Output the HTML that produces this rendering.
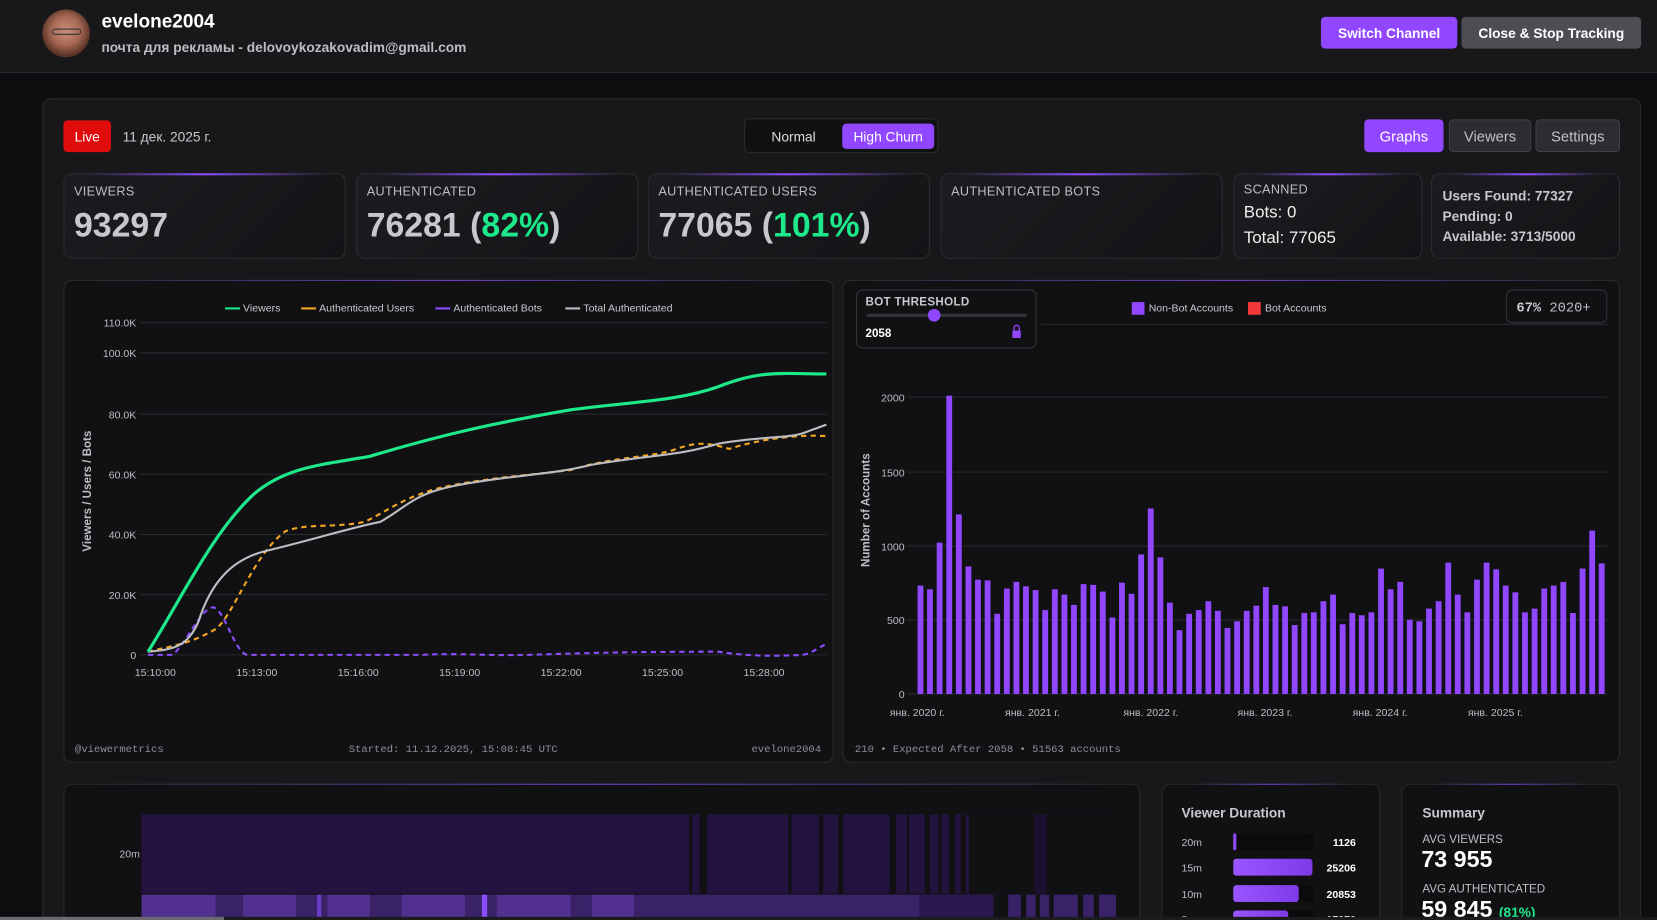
<!DOCTYPE html>
<html><head><meta charset="utf-8">
<style>
*{box-sizing:border-box;margin:0;padding:0}
html,body{width:1657px;height:920px;overflow:hidden;background:#0e0e10;font-family:"Liberation Sans","Noto Sans CJK JP",sans-serif;color:#efeff1}
#w{position:absolute;left:0;top:0;width:1568px;height:871px;overflow:hidden;transform:scale(1.05676,1.05626);transform-origin:0 0;background:#0e0e10}
.a{position:absolute}
.hdr{left:0;top:0;width:1568px;height:69px;background:#18181b;border-bottom:1px solid #2e2e33}
.btn{position:absolute;display:flex;align-items:center;justify-content:center;border-radius:4px;font-size:13px}
.panel{left:40px;top:93px;width:1513px;height:800px;background:#18181b;border:1px solid #2a2a2e;border-radius:8px}
.card{position:absolute;top:164px;height:81px;border:1px solid #2c2c31;border-radius:8px;background:linear-gradient(135deg,#1c1c20,#141417)}
.card:before{content:"";position:absolute;left:20px;right:20px;top:-1px;height:2px;background:linear-gradient(90deg,transparent,#8a4dff,transparent)}
.lbl{position:absolute;left:9px;top:9px;font-size:12px;color:#bdbdc2;letter-spacing:.3px}
.big{position:absolute;left:9px;top:30px;font-size:32px;font-weight:bold;color:#c8c8cc}
.g{color:#1de98b}
.cp{position:absolute;background:#111114;border:1px solid #2a2a2e;border-radius:8px}
.cp:before{content:"";position:absolute;left:30px;right:30px;top:-1px;height:1px;background:linear-gradient(90deg,transparent,#6c3fc4,transparent)}
</style></head><body><div id="w">
<div class="a hdr"></div>
<div class="a" style="left:40px;top:9px;width:45px;height:45px;border-radius:50%;background:radial-gradient(circle at 50% 45%,#c98f7a 0,#a86a55 40%,#5a3326 70%,#c05a20 100%)"></div>
<div class="a" style="left:49px;top:27px;width:28px;height:6px;border:1px solid #333;border-radius:3px"></div>
<div class="a" style="left:96px;top:10px;font-size:18px;font-weight:bold;color:#fff">evelone2004</div>
<div class="a" style="left:96px;top:37px;font-size:13px;font-weight:bold;color:#bdbdc2">почта для рекламы - delovoykozakovadim@gmail.com</div>
<div class="btn" style="left:1250px;top:16px;width:129px;height:30px;background:#9147ff;color:#fff;font-weight:bold">Switch Channel</div>
<div class="btn" style="left:1383px;top:16px;width:170px;height:30px;background:#4d4d53;color:#fff;font-weight:bold">Close &amp; Stop Tracking</div>

<div class="a panel"></div>
<div class="btn" style="left:60px;top:114px;width:45px;height:30px;background:#e00c0c;color:#fff">Live</div>
<div class="a" style="left:116px;top:122px;font-size:13px;color:#c8c8cc">11 дек. 2025 г.</div>
<div class="a" style="left:704px;top:112px;width:184px;height:33px;background:#111113;border:1px solid #2a2a2e;border-radius:5px"></div>
<div class="a" style="left:730px;top:122px;font-size:13px;color:#ddd">Normal</div>
<div class="btn" style="left:797px;top:117px;width:87px;height:24px;background:#9147ff;color:#fff">High Churn</div>
<div class="btn" style="left:1291px;top:113px;width:75px;height:31px;background:#9147ff;color:#fff;font-size:14px">Graphs</div>
<div class="btn" style="left:1371px;top:113px;width:78px;height:31px;background:#2c2c31;border:1px solid #404046;color:#c0c0c5;font-size:14px">Viewers</div>
<div class="btn" style="left:1453px;top:113px;width:80px;height:31px;background:#2c2c31;border:1px solid #404046;color:#c0c0c5;font-size:14px">Settings</div>

<div class="card" style="left:60px;width:267px"><div class="lbl">VIEWERS</div><div class="big">93297</div></div>
<div class="card" style="left:337px;width:267px"><div class="lbl">AUTHENTICATED</div><div class="big">76281 (<span class="g">82%</span>)</div></div>
<div class="card" style="left:613px;width:267px"><div class="lbl">AUTHENTICATED USERS</div><div class="big">77065 (<span class="g">101%</span>)</div></div>
<div class="card" style="left:890px;width:267px"><div class="lbl">AUTHENTICATED BOTS</div></div>
<div class="card" style="left:1167px;width:179px"><div class="lbl" style="top:7px">SCANNED</div><div class="a" style="left:9px;top:28px;font-size:16px;color:#eee">Bots: 0</div><div class="a" style="left:9px;top:52px;font-size:16px;color:#eee">Total: 77065</div></div>
<div class="card" style="left:1354px;width:179px"><div class="a" style="left:10px;top:11px;font-size:13px;font-weight:bold;color:#c8c8cc;line-height:19px">Users Found: 77327<br>Pending: 0<br>Available: 3713/5000</div></div>

<div class="cp" style="left:60px;top:265px;width:729px;height:457px"></div>
<div class="cp" style="left:797px;top:265px;width:736px;height:457px"></div>
<div class="cp" style="left:60px;top:742px;width:1019px;height:160px"></div>
<div class="cp" style="left:1099px;top:742px;width:207px;height:160px"></div>
<div class="cp" style="left:1326px;top:742px;width:207px;height:160px"></div>

<svg class="a" style="left:0;top:0" width="1568" height="871" font-family="Liberation Sans, sans-serif">
<g stroke="#2a2a2f" stroke-width="1">
<line x1="133" x2="782" y1="305.5" y2="305.5"/><line x1="133" x2="782" y1="334" y2="334"/><line x1="133" x2="782" y1="392" y2="392"/><line x1="133" x2="782" y1="449" y2="449"/><line x1="133" x2="782" y1="506" y2="506"/><line x1="133" x2="782" y1="563" y2="563"/><line x1="133" x2="782" y1="620" y2="620"/>
</g>
<g font-size="10" fill="#bdbdc2" text-anchor="end">
<text x="129" y="309">110.0K</text><text x="129" y="338">100.0K</text><text x="129" y="396">80.0K</text><text x="129" y="453">60.0K</text><text x="129" y="510">40.0K</text><text x="129" y="567">20.0K</text><text x="129" y="624">0</text>
</g>
<text transform="translate(86,465) rotate(-90)" text-anchor="middle" font-size="11" font-weight="bold" fill="#bdbdc2">Viewers / Users / Bots</text>
<g font-size="10" fill="#bdbdc2" text-anchor="middle">
<text x="147" y="640">15:10:00</text><text x="243" y="640">15:13:00</text><text x="339" y="640">15:16:00</text><text x="435" y="640">15:19:00</text><text x="531" y="640">15:22:00</text><text x="627" y="640">15:25:00</text><text x="723" y="640">15:28:00</text>
</g>
<g font-size="10" fill="#c8c8cc">
<line x1="213" x2="227" y1="292" y2="292" stroke="#1de98b" stroke-width="2"/><text x="230" y="295">Viewers</text>
<line x1="285" x2="299" y1="292" y2="292" stroke="#f5a623" stroke-width="2"/><text x="302" y="295">Authenticated Users</text>
<line x1="412" x2="426" y1="292" y2="292" stroke="#8a4dff" stroke-width="2"/><text x="429" y="295">Authenticated Bots</text>
<line x1="535" x2="549" y1="292" y2="292" stroke="#bdbdc2" stroke-width="2"/><text x="552" y="295">Total Authenticated</text>
</g>
<path d="M140,620 L163,620 C175,612 190,575 202,575 C213,578 222,618 234,620 L400,620 C430,618 460,621 500,620 C560,618 600,617 680,617 C700,620 720,622 760,620 C770,618 775,612 782,610" fill="none" stroke="#8a4dff" stroke-width="2" stroke-dasharray="5,4"/>
<path d="M140,617 C160,612 180,610 205,595 C222,580 240,525 270,503 C290,495 320,500 345,494 C365,485 385,468 425,460 C465,452 500,450 540,445 C580,432 620,433 640,425 C660,418 670,419 690,425 C720,415 760,411 782,413" fill="none" stroke="#f5a623" stroke-width="2" stroke-dasharray="5,4"/>
<path d="M140,617 C165,615 178,612 188,588 C200,550 220,530 250,522 C300,510 330,500 360,494 C385,480 390,468 430,460 C480,450 520,450 560,440 C620,430 640,432 680,420 C720,413 745,415 760,410 L782,402" fill="none" stroke="#bdbdc2" stroke-width="2"/>
<path d="M140,617 C170,570 200,505 240,468 C270,442 305,440 350,432 C420,411 470,400 540,388 C600,380 640,380 680,366 C720,350 740,354 782,354" fill="none" stroke="#1de98b" stroke-width="3"/>
<g font-size="10" fill="#8e8e94" font-family="Liberation Mono, monospace">
<text x="71" y="712">@viewermetrics</text><text x="330" y="712">Started: 11.12.2025, 15:08:45 UTC</text><text x="777" y="712" text-anchor="end">evelone2004</text>
<text x="809" y="712">210 • Expected After 2058 • 51563 accounts</text>
</g>
<g stroke="#2a2a2f" stroke-width="1">
<line x1="985" x2="1521" y1="307" y2="307"/>
<line x1="858" x2="1521" y1="376" y2="376"/><line x1="858" x2="1521" y1="447" y2="447"/><line x1="858" x2="1521" y1="517" y2="517"/><line x1="858" x2="1521" y1="587" y2="587"/><line x1="858" x2="1521" y1="657" y2="657"/>
</g>
<g font-size="10" fill="#bdbdc2" text-anchor="end">
<text x="856" y="380">2000</text><text x="856" y="451">1500</text><text x="856" y="521">1000</text><text x="856" y="591">500</text><text x="856" y="661">0</text>
</g>
<text transform="translate(823,483) rotate(-90)" text-anchor="middle" font-size="11" font-weight="bold" fill="#bdbdc2">Number of Accounts</text>
<g font-size="10" fill="#bdbdc2" text-anchor="middle">
<text x="868" y="678">янв. 2020 г.</text><text x="977" y="678">янв. 2021 г.</text><text x="1089" y="678">янв. 2022 г.</text><text x="1197" y="678">янв. 2023 г.</text><text x="1306" y="678">янв. 2024 г.</text><text x="1415" y="678">янв. 2025 г.</text>
</g>
<g transform="translate(0,657) scale(1,-1)" fill="#9147ff">
<rect x="868.3" width="5.5" height="102.6"/><rect x="877.3" width="5.5" height="99.1"/><rect x="886.4" width="5.5" height="143.3"/><rect x="895.5" width="5.5" height="282.4"/><rect x="904.6" width="5.5" height="170"/><rect x="913.7" width="5.5" height="120.8"/><rect x="922.7" width="5.5" height="108.2"/><rect x="931.8" width="5.5" height="107.5"/><rect x="940.9" width="5.5" height="75.9"/><rect x="950" width="5.5" height="99.8"/><rect x="959.1" width="5.5" height="106.1"/><rect x="968.1" width="5.5" height="101.9"/><rect x="977.2" width="5.5" height="98.4"/><rect x="986.3" width="5.5" height="79.4"/><rect x="995.4" width="5.5" height="99.1"/><rect x="1004.5" width="5.5" height="94.1"/><rect x="1013.5" width="5.5" height="84.3"/><rect x="1022.6" width="5.5" height="104"/><rect x="1031.7" width="5.5" height="103.3"/><rect x="1040.8" width="5.5" height="96.9"/><rect x="1049.9" width="5.5" height="72.4"/><rect x="1058.9" width="5.5" height="105.4"/><rect x="1068" width="5.5" height="94.8"/><rect x="1077.1" width="5.5" height="132.1"/><rect x="1086.2" width="5.5" height="175.6"/><rect x="1095.3" width="5.5" height="129.3"/><rect x="1104.3" width="5.5" height="86.4"/><rect x="1113.4" width="5.5" height="60.4"/><rect x="1122.5" width="5.5" height="75.9"/><rect x="1131.6" width="5.5" height="79.4"/><rect x="1140.7" width="5.5" height="87.8"/><rect x="1149.7" width="5.5" height="78.7"/><rect x="1158.8" width="5.5" height="62.5"/><rect x="1167.9" width="5.5" height="68.8"/><rect x="1177" width="5.5" height="78.7"/><rect x="1186.1" width="5.5" height="83.6"/><rect x="1195.1" width="5.5" height="101.2"/><rect x="1204.2" width="5.5" height="84.3"/><rect x="1213.3" width="5.5" height="82.9"/><rect x="1222.4" width="5.5" height="65.3"/><rect x="1231.5" width="5.5" height="76.6"/><rect x="1240.5" width="5.5" height="77.3"/><rect x="1249.6" width="5.5" height="87.8"/><rect x="1258.7" width="5.5" height="94.1"/><rect x="1267.8" width="5.5" height="66"/><rect x="1276.9" width="5.5" height="76.6"/><rect x="1285.9" width="5.5" height="74.5"/><rect x="1295" width="5.5" height="77.3"/><rect x="1304.1" width="5.5" height="118.7"/><rect x="1313.2" width="5.5" height="99.1"/><rect x="1322.3" width="5.5" height="106.1"/><rect x="1331.3" width="5.5" height="70.3"/><rect x="1340.4" width="5.5" height="68.8"/><rect x="1349.5" width="5.5" height="80.8"/><rect x="1358.6" width="5.5" height="87.8"/><rect x="1367.7" width="5.5" height="124.3"/><rect x="1376.7" width="5.5" height="94.1"/><rect x="1385.8" width="5.5" height="77.3"/><rect x="1394.9" width="5.5" height="108.2"/><rect x="1404" width="5.5" height="124.3"/><rect x="1413.1" width="5.5" height="118"/><rect x="1422.1" width="5.5" height="102.6"/><rect x="1431.2" width="5.5" height="96.2"/><rect x="1440.3" width="5.5" height="77.3"/><rect x="1449.4" width="5.5" height="80.8"/><rect x="1458.5" width="5.5" height="99.8"/><rect x="1467.5" width="5.5" height="102.6"/><rect x="1476.6" width="5.5" height="106.1"/><rect x="1485.7" width="5.5" height="76.6"/><rect x="1494.8" width="5.5" height="118.7"/><rect x="1503.9" width="5.5" height="154.6"/><rect x="1512.9" width="5.5" height="123.6"/>
</g>
<rect x="810.5" y="274.5" width="170" height="55" rx="6" fill="#111114" stroke="#333338"/>
<text x="819" y="289" font-size="11" font-weight="bold" fill="#c8c8cc" letter-spacing=".3">BOT THRESHOLD</text>
<rect x="820" y="297" width="152" height="3" rx="1.5" fill="#333338"/>
<circle cx="884" cy="298.5" r="6" fill="#9147ff"/>
<text x="819" y="319" font-size="11" font-weight="bold" fill="#fff">2058</text>
<rect x="958" y="313" width="8" height="7" rx="1" fill="#9147ff"/><path d="M959.5,313 v-2.5 a2.5,2.5 0 0 1 5,0 v2.5" fill="none" stroke="#9147ff" stroke-width="1.3"/>
<rect x="1071" y="286" width="12" height="12" fill="#9147ff"/><text x="1087" y="295" font-size="10" fill="#c8c8cc">Non-Bot Accounts</text>
<rect x="1181" y="286" width="12" height="12" fill="#f23a3a"/><text x="1197" y="295" font-size="10" fill="#c8c8cc">Bot Accounts</text>
<rect x="1425.5" y="274.5" width="95" height="31" rx="6" fill="#111114" stroke="#333338"/>
<text x="1435" y="295" font-size="13" font-family="Liberation Mono, monospace"><tspan font-weight="bold" fill="#c8c8cc">67%</tspan><tspan fill="#bdbdc2"> 2020+</tspan></text>
<rect x="134" y="771" width="922" height="75" fill="#23133f"/>
<g fill="#111114"><rect x="652" y="771" width="3" height="75"/><rect x="662" y="771" width="7" height="75"/><rect x="746" y="771" width="3" height="75"/><rect x="775" y="771" width="4" height="75"/><rect x="793" y="771" width="5" height="75"/><rect x="842" y="771" width="6" height="75"/><rect x="858" y="771" width="2" height="75"/><rect x="875" y="771" width="5" height="75"/><rect x="888" y="771" width="3" height="75"/><rect x="898" y="771" width="6" height="75"/><rect x="909" y="771" width="5" height="75"/><rect x="917" y="771" width="62" height="75"/><rect x="990" y="771" width="66" height="75"/></g>
<g fill="#1c1030"><rect x="979" y="771" width="11" height="75"/></g>
<rect x="134" y="847" width="922" height="24" fill="#3a2268"/>
<g fill="#52308f"><rect x="134" y="847" width="70" height="24"/><rect x="230" y="847" width="50" height="24"/><rect x="310" y="847" width="40" height="24"/><rect x="380" y="847" width="60" height="24"/><rect x="470" y="847" width="70" height="24"/><rect x="560" y="847" width="40" height="24"/></g>
<rect x="456" y="847" width="5" height="24" fill="#8a4dff"/><rect x="300" y="847" width="4" height="24" fill="#6a3dc4"/>
<g fill="#111114"><rect x="940" y="847" width="14" height="24"/><rect x="966" y="847" width="5" height="24"/><rect x="980" y="847" width="4" height="24"/><rect x="993" y="847" width="4" height="24"/><rect x="1020" y="847" width="5" height="24"/><rect x="1035" y="847" width="5" height="24"/></g>
<g fill="#2a1750"><rect x="870" y="847" width="70" height="24"/></g>
<text x="113" y="812" font-size="10" fill="#bdbdc2">20m</text>
<text x="1118" y="774" font-size="13" font-weight="bold" fill="#c8c8cc">Viewer Duration</text>
<g font-size="10" fill="#bdbdc2"><text x="1118" y="801">20m</text><text x="1118" y="825">15m</text><text x="1118" y="850">10m</text><text x="1118" y="874">5m</text></g>
<g fill="#0b0b0d"><rect x="1167" y="789" width="76" height="16" rx="3"/><rect x="1167" y="813" width="76" height="16" rx="3"/><rect x="1167" y="838" width="76" height="16" rx="3"/><rect x="1167" y="862" width="76" height="16" rx="3"/></g>
<defs><linearGradient id="pg" x1="0" x2="1"><stop offset="0" stop-color="#9a55ff"/><stop offset="1" stop-color="#7f3ae8"/></linearGradient></defs>
<g fill="url(#pg)"><rect x="1167" y="789" width="3" height="16" rx="1.5"/><rect x="1167" y="813" width="75" height="16" rx="3"/><rect x="1167" y="838" width="62" height="16" rx="3"/><rect x="1167" y="862" width="52" height="16" rx="3"/></g>
<g font-size="10" font-weight="bold" fill="#fff" text-anchor="end"><text x="1283" y="801">1126</text><text x="1283" y="825">25206</text><text x="1283" y="850">20853</text><text x="1283" y="874">17070</text></g>
<text x="1346" y="774" font-size="13" font-weight="bold" fill="#c8c8cc">Summary</text>
<text x="1346" y="798" font-size="11" fill="#bdbdc2">AVG VIEWERS</text>
<text x="1345" y="821" font-size="22" font-weight="bold" fill="#fff">73 955</text>
<text x="1346" y="845" font-size="11" fill="#bdbdc2">AVG AUTHENTICATED</text>
<text x="1345" y="868" font-size="22" font-weight="bold" fill="#fff">59 845 <tspan font-size="13" fill="#1de98b">(81%)</tspan></text>
<rect x="0" y="868" width="212" height="3" fill="#6a6a70"/>
<rect x="212" y="868" width="1356" height="3" fill="#1c1c1f"/>
</svg>
</div></body></html>
